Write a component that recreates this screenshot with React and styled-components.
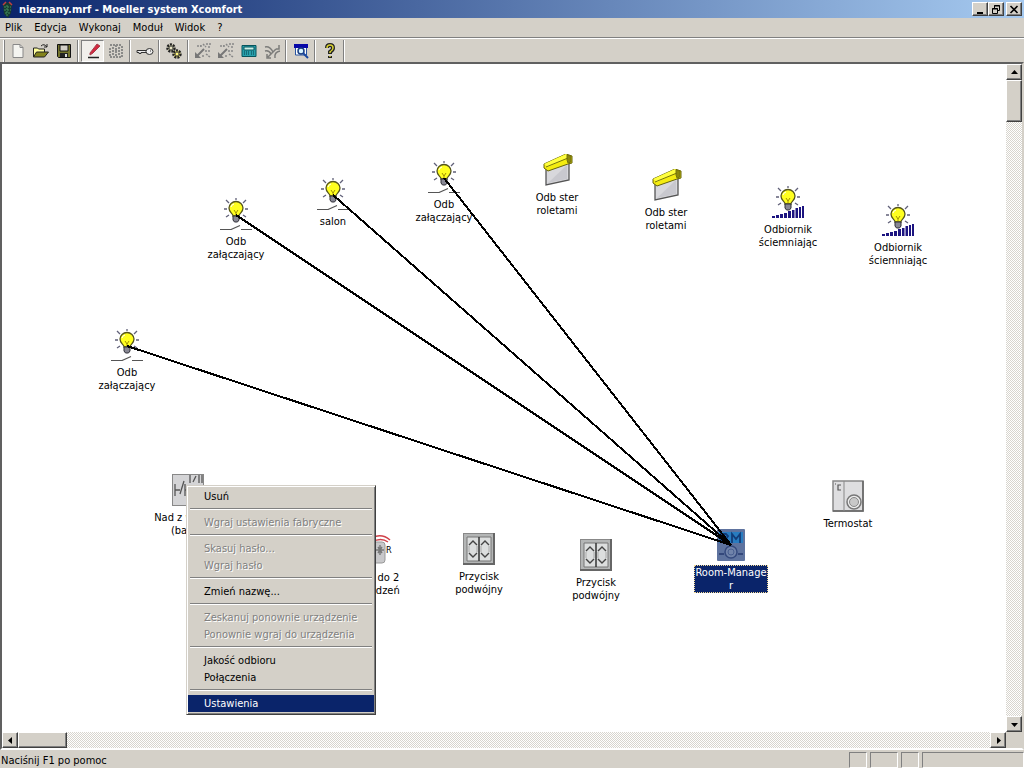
import React from 'react';
import styled, { createGlobalStyle, css } from 'styled-components';

const GlobalStyle = createGlobalStyle`
* { box-sizing: border-box; }
body {
margin: 0;
background: #d4d0c8;
color: #000;
font-family: "DejaVu Sans Condensed", "Noto Sans", sans-serif;
font-size: 11px;
line-height: 13px;
}
button {
font: inherit;
color: inherit;
border: 0;
padding: 0;
margin: 0;
background: none;
}`

const raised = css`
background: #d4d0c8;
border: 1px solid;
border-color: #fff #404040 #404040 #fff;
box-shadow: inset -1px -1px #808080;`

const Window = styled.div`
display: flex;
flex-direction: column;
min-height: 100vh;`

const TitleBar = styled.header`
display: flex;
align-items: center;
height: 18px;
padding: 0 2px 0 0;
background: linear-gradient(to right, #0a246a, #a6caf0);`

const Title = styled.h1`
flex: 1;
margin: 0 0 0 4px;
font-size: 11px;
font-weight: bold;
color: #fff;`

const CaptionButton = styled.button`
${raised}
display: flex;
align-items: center;
justify-content: center;
width: 16px;
height: 14px;
margin-left: ${p => p.$gap ? '2px' : '0'};`

const MenuBar = styled.nav`
display: flex;
align-items: center;
gap: 12px;
height: 20px;
padding: 0 5px;
border-bottom: 1px solid #808080;`

const ToolBar = styled.div`
display: flex;
align-items: center;
height: 24px;
padding-left: 3px;
border-top: 1px solid #fff;`

const Grip = styled.div`
width: 2px;
height: 22px;
margin-right: 1px;
border-left: 1px solid #fff;
border-right: 1px solid #808080;`

const ToolButton = styled.button`
display: flex;
align-items: center;
justify-content: center;
width: 23px;
height: 22px;
border: 1px solid transparent;
${p => p.$pressed && css`
background: #f1efeb;
border-color: #808080 #fff #fff #808080;`}`

const ToolSeparator = styled.div`
width: 2px;
height: 22px;
margin: 0 2px;
border-left: 1px solid #808080;
border-right: 1px solid #fff;`

const Client = styled.main`
flex: 1;
display: grid;
grid-template-columns: 1fr 16px;
grid-template-rows: 1fr 16px;
border: 2px solid;
border-color: #606060 #d4d0c8 #fff #606060;`

const Canvas = styled.div`
position: relative;
overflow: hidden;
min-height: 660px;
background: #fff;`

const Wires = styled.svg`
position: absolute;
left: 0;
top: 0;
width: 100%;
height: 100%;
pointer-events: none;`

const DeviceNode = styled.button`
position: absolute;
left: ${p => p.$x - 40}px;
top: ${p => p.$y}px;
width: 80px;
display: flex;
flex-direction: column;
align-items: center;
gap: 4px;`

const DeviceLabel = styled.span`
border: 1px solid transparent;
white-space: pre;
text-align: center;
${p => p.$selected && css`
background: #0a246a;
border: 1px dotted #f5db95;
color: #fff;`}`

const ScrollTrack = styled.div`
display: flex;
flex-direction: ${p => p.$vertical ? 'column' : 'row'};
background: repeating-conic-gradient(#fff 0 25%, #d8d5ce 0 50%) 0 0 / 2px 2px;`

const ScrollButton = styled.button`
${raised}
display: flex;
align-items: center;
justify-content: center;
width: 16px;
height: 16px;`

const ScrollThumb = styled.div`
${raised}
width: ${p => p.$vertical ? '16px' : '49px'};
height: ${p => p.$vertical ? '42px' : '16px'};`

const ScrollSpace = styled.div`
flex: 1;`

const Corner = styled.div`
background: #d4d0c8;`

const ContextMenu = styled.div`
position: absolute;
left: 184px;
top: 421px;
width: 190px;
padding: 2px 1px;
background: #d4d0c8;
border: 1px solid;
border-color: #d4d0c8 #404040 #404040 #d4d0c8;
box-shadow: inset 1px 1px #fff, inset -1px -1px #808080;`

const MenuItem = styled.button`
display: block;
width: 100%;
height: 17px;
padding: 0 16px;
text-align: left;
&:disabled {
color: #808080;
text-shadow: 1px 1px #fff;
}
${p => p.$active && css`
background: #0a246a;
color: #fff;`}`

const MenuRule = styled.hr`
height: 2px;
margin: 3px 2px 4px;
border: 0;
border-top: 1px solid #808080;
border-bottom: 1px solid #fff;`

const StatusBar = styled.footer`
display: flex;
gap: 3px;
height: 18px;
padding-top: 2px;`

const StatusText = styled.div`
flex: 1;
padding: 2px 1px 0;
white-space: nowrap;`

const StatusPane = styled.div`
width: ${p => p.$width}px;
border: 1px solid;
border-color: #808080 #fff #fff #808080;`

const Bulb = () => (
    <g>
        <path d="M6 2l3 3M26 2l-3 3M4 11h3M25 11h3M6 19l3-2M26 19l-3-2M16 0v2" stroke="#606078" strokeWidth="1.3" fill="none" />
        <path d="M13 18c0-3-4-3-4-8a7 6.500 0 0 1 14 0c0 5-4 5-4 8z" fill="#ffff20" stroke="#55551c" strokeWidth="1.3" />
        <path d="M11 9a4 4 0 0 1 3-3" stroke="#fff" fill="none" />
        <path d="M14 12l2 3 2-3M16 15v3" stroke="#a09000" fill="none" />
        <path d="M13 18h6v4l-1.500 2h-3l-1.500-2z" fill="#888894" stroke="#303038" />
    </g>
);

const icons = {
    switch: (
        <>
            <Bulb />
            <path d="M0 31.500h11l9-4M21 31.500h11" stroke="#555" strokeWidth="1.200" fill="none" />
        </>
    ),
    dimmer: (
        <>
            <Bulb />
            <path d="M0 30h3v2H0zM4 29h3v3H4zM8 28h3v4H8zM12 27h3v5h-3zM16 25h3v7h-3zM20 24h2.500v8H20zM23.500 22H26v10h-2.500zM27 21h2v11h-2zM30 20h2v12h-2z" fill="#1c1480" />
        </>
    ),
    blind: (
        <>
            <path d="M5 13l23-5v18L5 31z" fill="#d8d8dc" stroke="#555" strokeWidth="1.300" />
            <path d="M7 29l19-18v14z" fill="#bebec4" opacity=".6" />
            <path d="M3 10L25 0l6 2v7l-4 1-20 7-4-3z" fill="#f4ec10" stroke="#66640a" />
            <path d="M3 10L25 0l3 3L7 13z" fill="#ffff40" />
            <path d="M5 13l22-9M26 1l4 1v6l-3 1-1-3z" fill="#8c880c" stroke="#77740c" />
        </>
    ),
    binary: (
        <>
            <path d="M0 0h32v32H0z" fill="#d4d4d6" stroke="#888" strokeWidth="2" />
            <path d="M3 10v12M3 16h5M8 20l4-13M13 10v12M13 16h5M18 1v8M24 2l-3 6M27 1v8M30 1v8" stroke="#555" strokeWidth="1.300" fill="none" />
        </>
    ),
    remote: (
        <>
            <path d="M8 5q12-7 21 1M11 8q9-5 16 0" stroke="#d04048" strokeWidth="1.500" fill="none" />
            <rect x="0" y="8" width="24" height="21" rx="3" fill="#c8c8ca" stroke="#999" />
            <path d="M19 11v10M15 16h8M17 13l4 6M21 13l-4 6" stroke="#777" strokeWidth="1.400" />
        </>
    ),
    rocker: (
        <>
            <path d="M0 0h32v32H0z" fill="#b4b6b6" />
            <path d="M0 32V0h32" fill="none" stroke="#888" strokeWidth="2" />
            <path d="M0 31h32M31 0v32" stroke="#666" strokeWidth="2" />
            <path d="M4 4h24v24H4z" fill="#dcdede" stroke="#777" />
            <path d="M16 4v24" stroke="#333" strokeWidth="1.500" />
            <path d="M6 12l4-4 4 4M6 20l4 4 4-4M18 12l4-4 4 4M18 20l4 4 4-4" stroke="#444" strokeWidth="1.400" fill="none" />
            <path d="M6 13v6M14 13v6M18 13v6M26 13v6" stroke="#aaa" />
        </>
    ),
    room: (
        <>
            <rect x="2" y="0" width="28" height="32" rx="1" fill="#5e739f" />
            <path d="M4 3h24v11H4z" fill="#287cc0" />
            <path d="M6 14V5h5l2 2-2 3H6l6 4M17 14V5l4 5 4-5v9" stroke="#123c78" strokeWidth="1.800" fill="none" />
            <path d="M4 25h5M23 25h5" stroke="#273b70" strokeWidth="1.500" />
            <circle cx="16" cy="23" r="6" fill="#7083aa" stroke="#354a7e" strokeWidth="1.500" />
            <circle cx="16" cy="23" r="3" fill="none" stroke="#495f90" />
        </>
    ),
    thermostat: (
        <>
            <path d="M1 1h30v30H1z" fill="#dedee0" stroke="#888" strokeWidth="1.500" />
            <path d="M31 1v30H1" stroke="#666" strokeWidth="1.500" fill="none" />
            <path d="M12 1v30" stroke="#888" />
            <path d="M3 4h1M9 5H6v5h3" stroke="#555" strokeWidth="1.200" fill="none" />
            <circle cx="22" cy="22" r="7" fill="#eee" stroke="#777" strokeWidth="1.500" />
            <circle cx="22" cy="22" r="4.500" fill="#c8c8c8" stroke="#888" />
        </>
    ),
};

const ToolIcon = ({ children }) => (
    <svg width="18" height="16" viewBox="0 0 18 16" aria-hidden="true" fill="none">{children}</svg>
);

const Transfer = () => (
    <ToolIcon>
        <path d="M1 15v-6l6 6z" fill="#777" />
        <path d="M3 13l7-7" stroke="#777" strokeWidth="2" />
        <path d="M3 3h4M7 2v3M9 1l3 3M12 1h5M14 4h3M11 8h6M12 11l4 3M9 12v3" stroke="#888" strokeWidth="1.500" strokeDasharray="2 1" />
    </ToolIcon>
);

const tools = [
    ['Nowy', <ToolIcon><path d="M4 1.500h7l3 3v10H4z" fill="#f4f4f0" stroke="#888" /><path d="M11 1.500v3h3" stroke="#888" /></ToolIcon>],
    ['Otwórz', <ToolIcon><path d="M1.500 14V5h4l1 1h6v3" fill="#ffff9c" stroke="#222" /><path d="M1.500 14l3-5h12l-4 5z" fill="#84841c" stroke="#222" /><path d="M9 3q3-3 6 1M15 1v3h-3" stroke="#222" /></ToolIcon>],
    ['Zapisz', <ToolIcon><path d="M2.500 1.500h13v13h-12l-1-1z" fill="#74742c" stroke="#111" /><path d="M5 2h8v6H5z" fill="#d4d0c8" stroke="#111" /><path d="M5 10h8v4H5z" fill="#222" /><path d="M10 11h2v3h-2z" fill="#ddd" /></ToolIcon>],
    null,
    ['Edycja', <ToolIcon><path d="M6 10l7-9 3 2-7 7-3 2z" fill="#d42840" stroke="#a4404c" /><path d="M4 14.500h11" stroke="#222" strokeWidth="1.500" /></ToolIcon>, true],
    ['Siatka', <ToolIcon><path d="M3 2h12M3 14h12M3 5v9M15 3v11M9 2v12M5 8h9M5 5h3M11 5h3M5 11h3M11 11h3" stroke="#8a8a88" strokeWidth="2" strokeDasharray="2 1" /></ToolIcon>],
    null,
    ['Hasło', <ToolIcon><path d="M11 7.500H1v2h2v1h2v-1h6" fill="#eee" stroke="#333" /><ellipse cx="13.500" cy="8.500" rx="3.500" ry="3" fill="#eee" stroke="#333" /><path d="M14 8h1" stroke="#333" /></ToolIcon>],
    null,
    ['Ustawienia', <ToolIcon><circle cx="6" cy="5" r="3.500" fill="#c8c49a" stroke="#222" strokeWidth="2.500" strokeDasharray="2 1" /><circle cx="12" cy="11" r="3.500" fill="#ded85c" stroke="#222" strokeWidth="2.500" strokeDasharray="2 1" /><circle cx="6" cy="5" r="2" fill="#e8e4c0" stroke="#444" /><circle cx="12" cy="11" r="2" fill="#fff47c" stroke="#444" /></ToolIcon>],
    null,
    ['Wczytaj', <Transfer />],
    ['Wgraj', <Transfer />],
    ['Kalkulator', <ToolIcon><path d="M2 2.500h14v11H2z" fill="#28a0ac" stroke="#07545c" /><path d="M4 4h10v3H4z" fill="#c8f0e8" stroke="#07545c" /><path d="M4 9h5M4 11h5M11 9h3M11 11h3" stroke="#063c48" strokeDasharray="1 1" /></ToolIcon>],
    ['Połączenia', <ToolIcon><path d="M2 4q5-1 8 5M2 8q4-1 6 3M5 14l8-8M13 6h3V2M12 15q-1-6 5-7M4 11v4h4" stroke="#7c7c7a" strokeWidth="1.500" /></ToolIcon>],
    null,
    ['Podgląd', <ToolIcon><path d="M2 1h14v4H2z" fill="#0808a8" /><path d="M3.500 5v7h11V5" fill="#fff" stroke="#2854a0" /><circle cx="9" cy="8" r="3" fill="#d8f4ff" stroke="#183c80" strokeWidth="1.500" /><path d="M11 10l5 5" stroke="#1848a0" strokeWidth="2" /></ToolIcon>],
    null,
    ['Pomoc', <ToolIcon><path d="M6 5q0-3 3-3t3 3q0 2-3 4v2M9 13v2" stroke="#222" strokeWidth="4" /><path d="M6 5q0-3 3-3t3 3q0 2-3 4v1M9 13v1" stroke="#d8d030" strokeWidth="1.500" /></ToolIcon>],
    null,
];

// x is the middle of the icon, y its top edge
const devices = [
    { x: 234, y: 134, icon: 'switch', label: 'Odb\nzałączający', linked: true },
    { x: 331, y: 114, icon: 'switch', label: 'salon', linked: true },
    { x: 442, y: 97, icon: 'switch', label: 'Odb\nzałączający', linked: true },
    { x: 125, y: 265, icon: 'switch', label: 'Odb\nzałączający', linked: true },
    { x: 555, y: 90, icon: 'blind', label: 'Odb ster\nroletami' },
    { x: 664, y: 105, icon: 'blind', label: 'Odb ster\nroletami' },
    { x: 786, y: 122, icon: 'dimmer', label: 'Odbiornik\nściemniając' },
    { x: 896, y: 140, icon: 'dimmer', label: 'Odbiornik\nściemniając' },
    { x: 186, y: 410, icon: 'binary', label: 'Nad z wejścia\n(bater)' },
    { x: 375, y: 470, icon: 'remote', label: 'Nad do 2\nurządzeń' },
    { x: 477, y: 469, icon: 'rocker', label: 'Przycisk\npodwójny' },
    { x: 594, y: 475, icon: 'rocker', label: 'Przycisk\npodwójny' },
    { x: 729, y: 465, icon: 'room', label: 'Room-Manage\nr', selected: true },
    { x: 846, y: 416, icon: 'thermostat', label: 'Termostat' },
];

const hub = devices.find(d => d.selected);

const menuItems = [
    ['Usuń'],
    null,
    ['Wgraj ustawienia fabryczne', 'disabled'],
    null,
    ['Skasuj hasło...', 'disabled'],
    ['Wgraj hasło', 'disabled'],
    null,
    ['Zmień nazwę...'],
    null,
    ['Zeskanuj ponownie urządzenie', 'disabled'],
    ['Ponownie wgraj do urządzenia', 'disabled'],
    null,
    ['Jakość odbioru'],
    ['Połączenia'],
    null,
    ['Ustawienia', 'active'],
];

const arrows = {
    up: 'M0 5l3.500-4L7 5z',
    down: 'M0 2l3.500 4L7 2z',
    left: 'M5 0L1 3.500 5 7z',
    right: 'M2 0l4 3.500L2 7z',
};

const Arrow = ({ dir }) => (
    <svg width="7" height="7" viewBox="0 0 7 7" aria-hidden="true"><path d={arrows[dir]} /></svg>
);

const AppLogo = () => (
    <svg width="15" height="17" viewBox="0 0 15 17" aria-hidden="true">
        <path d="M3 4q4-5 9 0l-1 8-3 5-4-4z" fill="#183c30" />
        <path d="M3 4l3-3M12 4L9 1" stroke="#c04040" strokeWidth="1.500" />
        <path d="M4 6h7M4 9h7M5 12h5M7 4v11" stroke="#409060" strokeDasharray="2 1" />
    </svg>
);

const Scrollbar = ({ vertical }) => (
    <ScrollTrack $vertical={vertical}>
        <ScrollButton aria-label={vertical ? 'W górę' : 'W lewo'}><Arrow dir={vertical ? 'up' : 'left'} /></ScrollButton>
        <ScrollThumb $vertical={vertical} />
        <ScrollSpace />
        <ScrollButton aria-label={vertical ? 'W dół' : 'W prawo'}><Arrow dir={vertical ? 'down' : 'right'} /></ScrollButton>
    </ScrollTrack>
);

const App = () => {
    return (
        <Window>
            <GlobalStyle />
            <TitleBar>
                <AppLogo />
                <Title>nieznany.mrf - Moeller system Xcomfort</Title>
                <CaptionButton aria-label="Minimalizuj">
                    <svg width="10" height="9" viewBox="0 0 10 9"><path d="M2 7h6v2H2z" /></svg>
                </CaptionButton>
                <CaptionButton aria-label="Przywróć">
                    <svg width="10" height="9" viewBox="0 0 10 9" fill="none" stroke="#000"><path d="M3.500 3V.5h5v5H7M3 1h6M1.500 3.500h5v5h-5zM1 4h6" /></svg>
                </CaptionButton>
                <CaptionButton $gap aria-label="Zamknij">
                    <svg width="10" height="9" viewBox="0 0 10 9"><path d="M1.500 1l7 7M8.500 1l-7 7" stroke="#000" strokeWidth="1.600" /></svg>
                </CaptionButton>
            </TitleBar>
            <MenuBar>
                {['Plik', 'Edycja', 'Wykonaj', 'Moduł', 'Widok', '?'].map(name => (
                    <button key={name}>{name}</button>
                ))}
            </MenuBar>
            <ToolBar>
                <Grip />
                {tools.map((tool, i) => tool
                    ? <ToolButton key={i} aria-label={tool[0]} $pressed={tool[2]}>{tool[1]}</ToolButton>
                    : <ToolSeparator key={i} />
                )}
            </ToolBar>
            <Client>
                <Canvas>
                    {devices.map((d, i) => (
                        <DeviceNode key={i} $x={d.x} $y={d.y}>
                            <svg width="32" height="32" viewBox="0 0 32 32" aria-hidden="true">{icons[d.icon]}</svg>
                            <DeviceLabel $selected={d.selected}>{d.label}</DeviceLabel>
                        </DeviceNode>
                    ))}
                    <Wires stroke="#000" strokeWidth="2" shapeRendering="crispEdges">
                        {devices.filter(d => d.linked).map((d, i) => (
                            <line key={i} x1={d.x} y1={d.y + 17} x2={hub.x} y2={hub.y + 16} />
                        ))}
                        <text x="384" y="489" fontSize="9" fill="#000" stroke="none">R</text>
                    </Wires>
                    <ContextMenu>
                        {menuItems.map((item, i) => item
                            ? <MenuItem key={i} disabled={item[1] === 'disabled'} $active={item[1] === 'active'}>{item[0]}</MenuItem>
                            : <MenuRule key={i} />
                        )}
                    </ContextMenu>
                </Canvas>
                <Scrollbar vertical />
                <Scrollbar />
                <Corner />
            </Client>
            <StatusBar>
                <StatusText>Naciśnij F1 po pomoc</StatusText>
                <StatusPane $width={18} />
                <StatusPane $width={28} />
                <StatusPane $width={18} />
                <StatusPane $width={102} />
            </StatusBar>
        </Window>
    );
};

export default App;
